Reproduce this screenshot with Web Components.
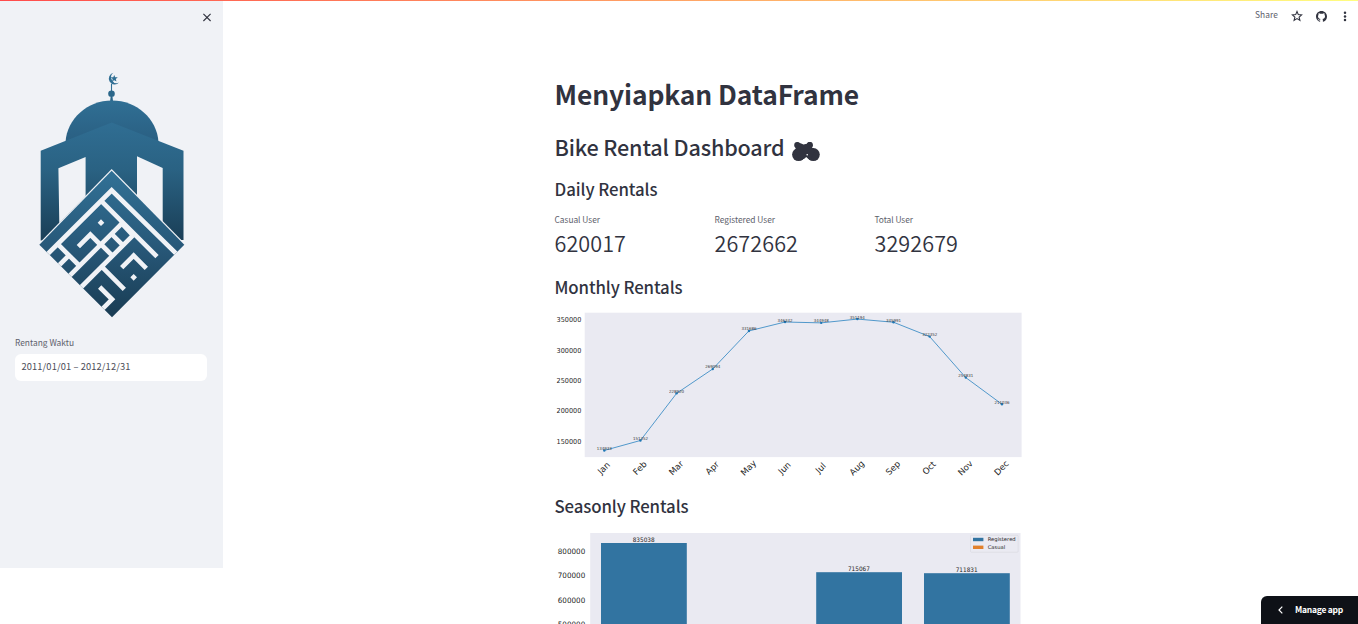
<!DOCTYPE html>
<html lang="id">
<head>
<meta charset="utf-8">
<title>Bike Rental Dashboard</title>
<style>
html,body{margin:0;height:100%;overflow:hidden;background:#fff}
body{font-family:"Noto Sans CJK SC","Noto Sans",sans-serif;color:#31333f}
</style>
</head>
<body>
<rental-app></rental-app>
<script>
const define = (name, html, init) => customElements.define(name, class extends HTMLElement {
  connectedCallback() {
    if (this.shadowRoot) return;
    const t = document.createElement('template');
    t.innerHTML = html;
    this.attachShadow({mode: 'open'}).append(t.content.cloneNode(true));
    if (init) init.call(this, this.shadowRoot);
  }
});

/* One line of text, tracked to the width given in its "w" attribute. */
define('fit-text', `<style>:host{display:block;white-space:nowrap}span{display:inline-block}</style><span><slot></slot></span>`, function (root) {
  const span = root.querySelector('span');
  const n = this.textContent.length;
  const width = +this.getAttribute('w');
  span.style.letterSpacing = (width - span.getBoundingClientRect().width) / n + 'px';
});

define('mosque-logo', `<style>:host{display:block}svg{display:block}</style>
<svg width="165" height="260" viewBox="30 65 165 260">
  <defs>
    <linearGradient id="dome" x1="0" y1="0" x2="0" y2="1"><stop offset="0" stop-color="#306f94"/><stop offset="1" stop-color="#27587a"/></linearGradient>
    <linearGradient id="hall" gradientUnits="userSpaceOnUse" x1="0" y1="122" x2="0" y2="240"><stop offset="0" stop-color="#306e93"/><stop offset=".4" stop-color="#2a6283"/><stop offset="1" stop-color="#1a3f57"/></linearGradient>
    <linearGradient id="tile" x1="0" y1="0" x2="0" y2="1"><stop offset="0" stop-color="#317196"/><stop offset=".5" stop-color="#28597a"/><stop offset="1" stop-color="#193c53"/></linearGradient>
    <clipPath id="cut"><path d="M245 32L463 254 246 472 28 254Z"/></clipPath>
  </defs>
  <path d="M113.4 72.8A5.9 5.9 0 1 0 119 82.6A5.7 5.7 0 0 1 113.4 72.8Z" fill="#306f94"/>
  <path d="M114.2 75l1 2.2 2.6.1-2 1.7.7 2.6-2.3-1.4-2.2 1.4.7-2.6-2-1.7 2.6-.1z" fill="#306f94"/>
  <path d="M111.5 84V102" stroke="#306f94" stroke-width="1.1"/><circle cx="111.5" cy="93.8" r="3.3" fill="#2b678a"/>
  <path d="M110 102l.6-5h1.9l.6 5z" fill="#2b678a"/>
  <path d="M65.5 142C67 119 87 100.5 112 100.5S157 119 158.5 142L112 160Z" fill="url(#dome)"/>
  <path d="M111.7 122.5L183.5 150.7V240L40.7 240.5V150.7Z" fill="url(#hall)"/>
  <path d="M58.4 168.3L85.6 157V196L59.3 223ZM137 156.3L162.7 168V222L137 196Z" fill="#f0f2f6"/>
  <g transform="translate(30 160) scale(.33333)">
    <path d="M245 27L468 254 246 476 23 254Z" fill="#f0f2f6"/>
    <path d="M245 32L463 254 246 472 28 254Z" fill="url(#tile)"/>
    <g clip-path="url(#cut)" fill="none" stroke="#f0f2f6" stroke-width="14">
      <path d="M45 290L245 91 447 289M218 127L381 290"/>
      <path d="M84 253L149 318M276 190L111 355M78 325L117 286"/>
      <path d="M271 186L309 226M309 226L145 390M243 220L279 256M209 249L247 287M215 320L283 388"/>
      <path d="M145 260L181 224 209 252M275 323L311 287 349 325M209 381L246 418 213 451"/>
    </g>
    <path d="M213 178l10 10-10 10-10-10zM311 342l10 10-10 10-10-10z" fill="#f0f2f6"/>
  </g>
</svg>`);

define('date-range', `<style>
:host{display:block;width:192px}
.label{font-size:8.4px;line-height:14px;color:#5d606b}
.box{height:27px;margin-top:5px;padding-left:6.5px;border-radius:6px;background:#fff;font-size:9.3px;line-height:25px;color:#4a4c57}
</style>
<fit-text class="label" w="59">Rentang Waktu</fit-text>
<div class="box"><fit-text w="109">2011/01/01 – 2012/12/31</fit-text></div>`);

define('side-bar', `<style>
:host{display:flex;flex-direction:column;box-sizing:border-box;width:223px;height:568px;background:#f0f2f6}
.close{align-self:flex-end;margin:13px 12px 0 0;display:block}
mosque-logo{margin:43px 0 0 30px}
date-range{margin:10px 0 0 15px}
</style>
<svg class="close" width="8" height="9" viewBox="0 0 8 9"><path d="M.4.8l7.2 7.2M7.6.8L.4 8" stroke="#31333f" stroke-width="1.1"/></svg>
<mosque-logo></mosque-logo>
<date-range></date-range>`);

define('tool-bar', `<style>
:host{display:flex;align-items:center;height:18px;color:#5d606b}
fit-text{font-size:8.4px;line-height:16px;width:23px;height:18px}
svg{display:block}.star{margin:2px 0 0 13px}.git{margin:2px 0 0 12.5px}.dots{margin:2px 0 0 16px}
</style>
<fit-text w="23">Share</fit-text>
<svg class="star" width="12" height="12" viewBox="0 0 12 12"><path d="M6 1.5l1.3 3.1 3.3.3-2.5 2.2.8 3.3L6 8.6l-2.9 1.8.8-3.3L1.4 4.9l3.3-.3z" fill="none" stroke="#31333f" stroke-width="1.1"/></svg>
<svg class="git" width="11" height="11" viewBox="0 0 16 16"><path fill="#31333f" d="M8 0C3.58 0 0 3.58 0 8c0 3.54 2.29 6.53 5.47 7.59.4.07.55-.17.55-.38v-1.49c-2.01.37-2.53-.49-2.69-.94-.09-.23-.48-.94-.82-1.13-.28-.15-.68-.52-.01-.53.63-.01 1.08.58 1.23.82.72 1.21 1.87.87 2.33.66.07-.52.28-.87.51-1.07-1.78-.2-3.64-.89-3.64-3.95 0-.87.31-1.59.82-2.15-.08-.2-.36-1.02.08-2.12 0 0 .67-.21 2.2.82a7.4 7.4 0 0 1 4 0c1.53-1.04 2.2-.82 2.2-.82.44 1.1.16 1.92.08 2.12.51.56.82 1.27.82 2.15 0 3.07-1.87 3.75-3.65 3.95.29.25.54.73.54 1.48v2.2c0 .21.15.46.55.38A8 8 0 0 0 16 8c0-4.42-3.58-8-8-8z"/></svg>
<svg class="dots" width="4" height="11" viewBox="0 0 4 11"><g fill="#31333f"><circle cx="2" cy="1.7" r="1.25"/><circle cx="2" cy="5.4" r="1.25"/><circle cx="2" cy="9.1" r="1.25"/></g></svg>`);

define('metric-card', `<style>
:host{display:block}
.l{font-size:8.4px;line-height:13px;color:#5d606b}.v{margin-top:2px;font-size:21.6px;line-height:30px;font-weight:350}
</style><div class="l"><slot name="label"></slot></div><div class="v"><slot name="value"></slot></div>`);

const svgText = (x, y, size, width, text, extra = '') =>
  `<text x="${x}" y="${y}" font-size="${size}" textLength="${width}" lengthAdjust="spacingAndGlyphs" ${extra}>${text}</text>`;
const chartCss = `<style>:host{display:block}svg{display:block;font-family:"DejaVu Sans",sans-serif;fill:#262626}</style>`;

define('line-chart', chartCss + `<div></div>`, function (root) {
  const months = ['Jan','Feb','Mar','Apr','May','Jun','Jul','Aug','Sep','Oct','Nov','Dec'];
  const values = [134933,151352,228920,269094,331686,346342,344948,351194,345991,322352,254831,211036];
  const X = i => 604.3 + i * 36.15, Y = v => 319.8 + (350000 - v) * .0006075;
  const pts = values.map((v, i) => [X(i), Y(v)]);
  let s = `<rect x="584.7" y="312.7" width="436.9" height="144.4" fill="#eaeaf2"/>`;
  for (const t of [350000,300000,250000,200000,150000])
    s += svgText(581.3, Y(t) + 2.5, 6.9, 24.7, t, 'text-anchor="end"');
  s += `<polyline points="${pts.join(' ')}" fill="none" stroke="#3f8fc6" stroke-width=".9"/>`;
  pts.forEach(([x, y], i) => {
    s += `<circle cx="${x}" cy="${y}" r="1.2" fill="#1f77b4"/>`;
    s += svgText(x, y - .5, 4.2, 15, values[i], 'text-anchor="middle" opacity=".9"');
    s += `<text transform="translate(${x - .5} 468) rotate(-45)" y="2.9" font-size="8.6" text-anchor="middle">${months[i]}</text>`;
  });
  root.querySelector('div').innerHTML = `<svg width="480" height="176" viewBox="555 309 480 176">${s}</svg>`;
});

define('bar-chart', chartCss + `<div></div>`, function (root) {
  let s = `<rect x="590.2" y="533" width="430.3" height="91" fill="#eaeaf2"/>`;
  [[800000,551.4],[700000,575.7],[600000,600.2],[500000,624.6]].forEach(([t, y]) => {
    s += svgText(585.2, y + 2.6, 7.4, 27.4, t, 'text-anchor="end"');
  });
  [[601,543,835038],[816.2,572.2,715067],[924,573.2,711831]].forEach(([x, y, v]) => {
    s += `<rect x="${x}" y="${y}" width="85.8" height="82" fill="#3274a1"/>`;
    s += svgText(x + 42.7, y - 1.2, 6.1, 22, v, 'text-anchor="middle"');
  });
  s += `<rect x="970.5" y="535.2" width="47.6" height="17" rx="1" fill="#eaeaf2" stroke="#d6d6df" stroke-width=".6"/>
    <rect x="973" y="537.8" width="10.4" height="3.4" fill="#3274a1"/><rect x="973" y="545.6" width="10.4" height="3.4" fill="#e1812c"/>`
    + svgText(987.7, 541.4, 5.2, 28, 'Registered') + svgText(987.7, 549.2, 5.2, 17.5, 'Casual');
  root.querySelector('div').innerHTML = `<svg width="480" height="94" viewBox="555 530 480 94">${s}</svg>`;
});

define('motorcycle-icon', `<style>:host{display:block}svg{display:block}</style>
<svg width="28" height="20" viewBox="0 0 28 20" fill="#31333f"><circle cx="6.6" cy="12.6" r="6.5"/><circle cx="21.3" cy="12.6" r="6.5"/><circle cx="5.2" cy="3" r="3"/><circle cx="17.8" cy="2.9" r="3.1"/><path d="M5 0L9.2 1.4 11.5 2.6 14.8 1.8 18 0 20.8 3 20 5.4 23 8 19 17H16.4L14.2 15 12 17H7L3 8.6 3.8 6.6 2.6 4Z"/><circle cx="15.2" cy="12.7" r=".8" fill="#fff"/></svg>`);

define('dash-board', `<style>
:host{display:block;width:480px}
h1,h2,h3{margin:0;font-weight:500}
h1{font-size:26.4px;line-height:36px;font-weight:700}
h2{display:flex;align-items:flex-start;margin-top:17px;height:36px;font-size:21.6px;line-height:36px}
motorcycle-icon{margin:13px 0 0 7.5px}
h3{font-size:16.8px;line-height:24px}
.daily{margin-top:12px}
.metrics{display:grid;grid-template-columns:repeat(3,160px);margin-top:12px}
.monthly{margin-top:17px}line-chart{margin:10px 0 0 .5px}
.season{margin-top:9px}bar-chart{margin:12px 0 0 .5px}
</style>
<h1><fit-text w="304.5">Menyiapkan DataFrame</fit-text></h1>
<h2><fit-text w="230">Bike Rental Dashboard</fit-text><motorcycle-icon></motorcycle-icon></h2>
<h3 class="daily"><fit-text w="103">Daily Rentals</fit-text></h3>
<div class="metrics">
  <metric-card><fit-text slot="label" w="45.5">Casual User</fit-text><fit-text slot="value" w="71.5">620017</fit-text></metric-card>
  <metric-card><fit-text slot="label" w="60.5">Registered User</fit-text><fit-text slot="value" w="83.5">2672662</fit-text></metric-card>
  <metric-card><fit-text slot="label" w="38.5">Total User</fit-text><fit-text slot="value" w="83.5">3292679</fit-text></metric-card>
</div>
<h3 class="monthly"><fit-text w="128">Monthly Rentals</fit-text></h3>
<line-chart></line-chart>
<h3 class="season"><fit-text w="134">Seasonly Rentals</fit-text></h3>
<bar-chart></bar-chart>`);

define('manage-app', `<style>
:host{display:flex;align-items:center;box-sizing:border-box;width:97px;height:28px;padding-left:17px;border-radius:6px 0 0 0;background:#0e1117;color:#fff;font-size:8.5px;font-weight:700;line-height:26px}
svg{display:block;margin-right:12px}fit-text{height:28px}
</style><svg width="5" height="8" viewBox="0 0 5 8"><path d="M4.3.6L1 4l3.3 3.4" fill="none" stroke="#fff" stroke-width="1.2"/></svg><fit-text w="48">Manage app</fit-text>`);

define('rental-app', `<style>
:host{display:grid;grid-template-columns:223px 331.5px 1fr;width:1358px;height:624px;overflow:hidden;position:relative}
.strip{position:absolute;inset:0 0 auto 0;height:1px;background:linear-gradient(90deg,#ff4b4b,#fffd80);z-index:1}
dash-board{grid-column:3;margin-top:76px}
tool-bar{position:absolute;right:11.5px;top:6px}
manage-app{position:absolute;right:0;bottom:0}
</style>
<div class="strip"></div><side-bar></side-bar><dash-board></dash-board><tool-bar></tool-bar><manage-app></manage-app>`);
</script>
</body>
</html>
